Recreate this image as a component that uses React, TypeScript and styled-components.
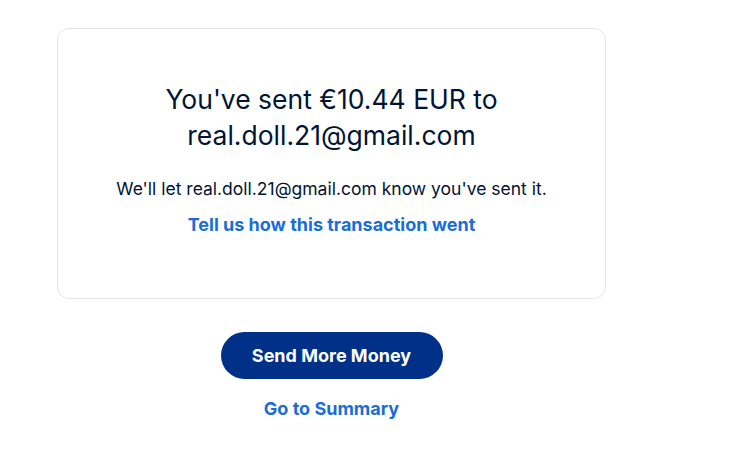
import React from "react";
import styled, { createGlobalStyle } from "styled-components";

const GlobalStyle = createGlobalStyle`
  body {
    margin: 0;
    background: #ffffff;
    font-family: Inter, "Liberation Sans", Arial, sans-serif;
    color: #001435;
  }
`;

const Page = styled.div`
  width: 549px;
  padding: 28px 0 0 57px;
  display: flex;
  flex-direction: column;
  align-items: center;
`;

const Card = styled.section`
  box-sizing: border-box;
  width: 100%;
  height: 271px;
  border: 1px solid #e5e5e5;
  border-radius: 12px;
  display: flex;
  flex-direction: column;
  align-items: center;
  padding-top: 52px;
`;

const Title = styled.h1`
  margin: 0;
  font-size: 26.5px;
  font-weight: 400;
  line-height: 36px;
  text-align: center;
  color: #001435;
`;

const Note = styled.p`
  margin: 24px 0 0;
  font-size: 17.5px;
  line-height: 24px;
  color: #001435;
`;

const TextLink = styled.a`
  display: block;
  margin-top: 12px;
  font-size: 18px;
  font-weight: 700;
  line-height: 24px;
  color: #1a6dd6;
  text-decoration: none;
  cursor: pointer;
`;

const PrimaryButton = styled.button`
  margin-top: 33px;
  width: 222px;
  height: 47px;
  border: none;
  border-radius: 24px;
  background: #003087;
  color: #ffffff;
  font-family: inherit;
  font-size: 18px;
  font-weight: 700;
  cursor: pointer;
`;

const Footer = styled.div`
  margin-top: 6px;
`;

export default function App() {
  const recipient = "real.doll.21@gmail.com";

  return (
    <>
      <GlobalStyle />
      <Page>
        <Card>
          <Title>
            You've sent €10.44 EUR to
            <br />
            {recipient}
          </Title>
          <Note>We'll let {recipient} know you've sent it.</Note>
          <TextLink>Tell us how this transaction went</TextLink>
        </Card>
        <PrimaryButton>Send More Money</PrimaryButton>
        <Footer>
          <TextLink>Go to Summary</TextLink>
        </Footer>
      </Page>
    </>
  );
}
